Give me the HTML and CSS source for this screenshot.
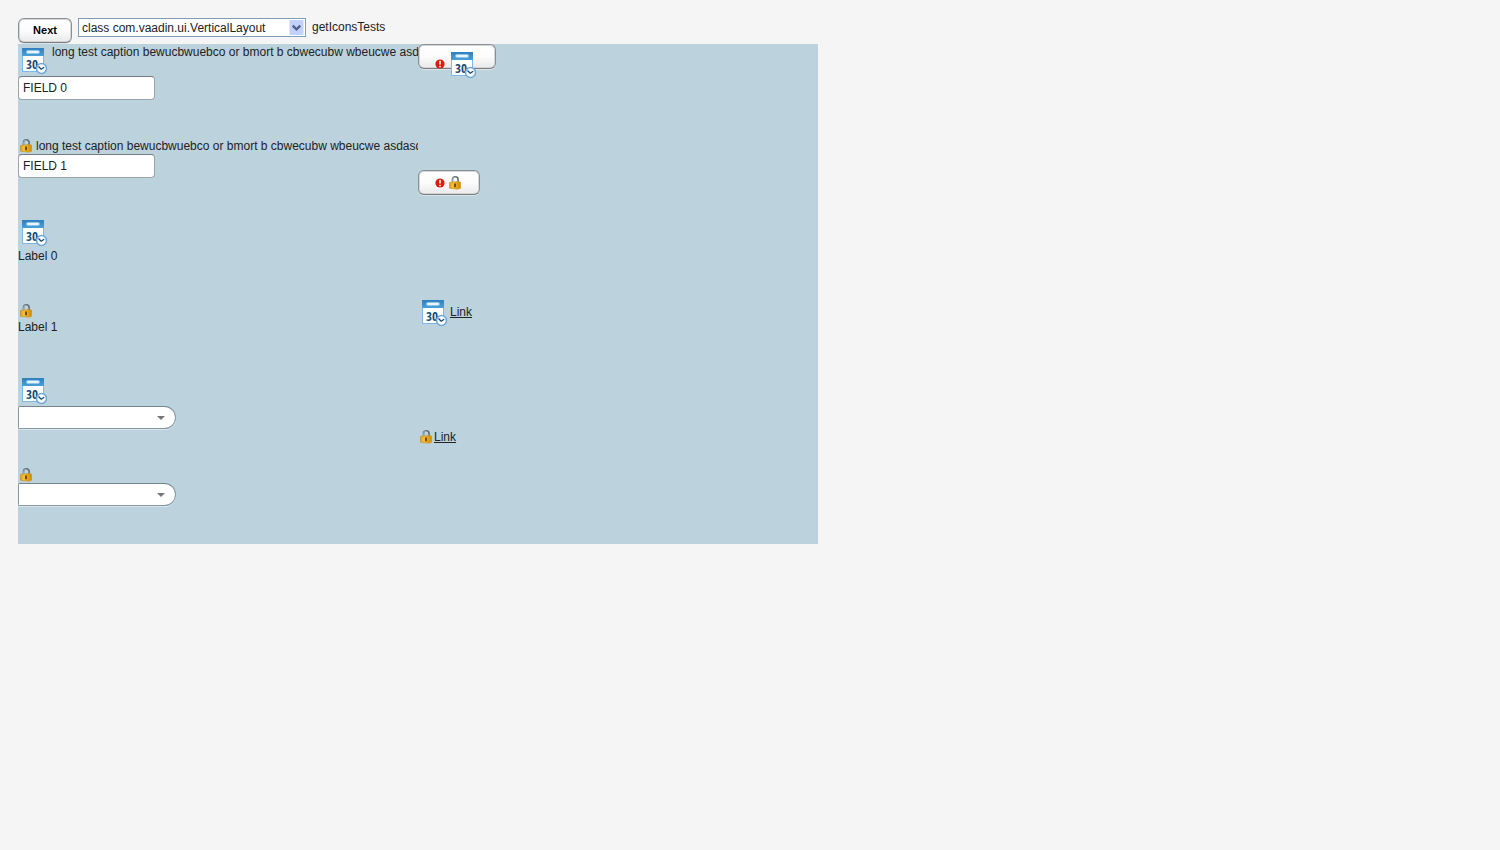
FILE: index.html
```html
<!DOCTYPE html>
<html lang="en">
<head>
<meta charset="utf-8">
<title>Icons Tests</title>
<link rel="stylesheet" href="styles.css">
</head>
<body>
<svg class="defs" aria-hidden="true">
  <defs>
    <linearGradient id="head" x1="0" y1="0" x2="0" y2="1"><stop offset="0" stop-color="#2f7fbd"/><stop offset="1" stop-color="#4ba0d8"/></linearGradient>
    <linearGradient id="gold" x1="0" y1="0" x2="1" y2="0"><stop offset="0" stop-color="#e09a12"/><stop offset=".3" stop-color="#f9c03e"/><stop offset="1" stop-color="#d08a00"/></linearGradient>
  </defs>
  <symbol id="calendar" viewBox="0 0 32 32">
    <rect x="4.500" y="9.500" width="21" height="18" fill="#fff" stroke="#7db9e8"/>
    <path d="M4 4h22v8H4z" fill="url(#head)"/>
    <rect x="8.500" y="6.500" width="13" height="3" rx="1.500" fill="#e8f5fd" stroke="#8bc5ec"/>
    <text x="8" y="25" class="day">30</text>
    <circle cx="23.500" cy="24.500" r="5" fill="#f5fbff" stroke="#6da8d8" stroke-width="1.500"/>
    <path d="M20.500 22.500l2.700 2.700 3-2" fill="none" stroke="#17476f" stroke-width="1.300"/>
  </symbol>
  <symbol id="lock" viewBox="0 0 16 16">
    <path d="M5.500 8V4.500a2.800 2.800 0 0 1 5.600 0V8" fill="none" stroke="#5f6f78" stroke-width="1.600"/>
    <path d="M5.500 7V4.700a2.600 2.600 0 0 1 2.800-2.500" fill="none" stroke="#b4c0c5" stroke-width=".7"/>
    <path d="M2.500 7.500l8-1 3 .5v6.300l-3 .9-8-1z" fill="url(#gold)" stroke="#c98d18" stroke-width=".6"/>
    <path d="M8 8.500v3.700" stroke="#4b3000" stroke-width="1.500"/>
  </symbol>
  <symbol id="error" viewBox="0 0 10 10">
    <circle cx="5" cy="5" r="4.600" fill="#dc1c08"/>
    <path d="M5 1.800v3.700M5 6.700v1.500" stroke="#fff" stroke-width="1.600"/>
  </symbol>
</svg>
<header class="toolbar">
  <button class="btn next" type="button">Next</button>
  <div class="picker">
    <select class="layout-select" aria-label="Layout class"><option>class com.vaadin.ui.VerticalLayout</option></select>
    <svg class="picker-arrow" viewBox="0 0 15 16" aria-hidden="true"><rect width="15" height="16" rx="1" fill="#c1d1fb"/><path d="M3.500 6l4 4 4-4" fill="none" stroke="#4d6185" stroke-width="2.400"/></svg>
  </div>
  <span class="test-name">getIconsTests</span>
</header>
<main class="stage">
  <section class="column fields">
    <div class="item">
      <label class="caption" for="field0"><svg class="icon large"><use href="#calendar"/></svg><span class="caption-text">long test caption bewucbwuebco or bmort b cbwecubw wbeucwe asdasdasd</span></label>
      <input class="text-field" id="field0" type="text" value="FIELD 0">
    </div>
    <div class="item">
      <label class="caption" for="field1"><svg class="icon small"><use href="#lock"/></svg><span class="caption-text">long test caption bewucbwuebco or bmort b cbwecubw wbeucwe asdasdasd</span></label>
      <input class="text-field" id="field1" type="text" value="FIELD 1">
    </div>
    <div class="item">
      <div class="caption"><svg class="icon large"><use href="#calendar"/></svg></div>
      <div class="label">Label 0</div>
    </div>
    <div class="item">
      <div class="caption"><svg class="icon small"><use href="#lock"/></svg></div>
      <div class="label">Label 1</div>
    </div>
    <div class="item">
      <label class="caption" for="combo0"><svg class="icon large"><use href="#calendar"/></svg></label>
      <div class="combo"><select class="combo-select" id="combo0" aria-label="Select 0"><option></option></select><svg class="combo-arrow" viewBox="0 0 8 4" aria-hidden="true"><path d="M0 0h8L4 4z"/></svg></div>
    </div>
    <div class="item">
      <label class="caption" for="combo1"><svg class="icon small"><use href="#lock"/></svg></label>
      <div class="combo"><select class="combo-select" id="combo1" aria-label="Select 1"><option></option></select><svg class="combo-arrow" viewBox="0 0 8 4" aria-hidden="true"><path d="M0 0h8L4 4z"/></svg></div>
    </div>
  </section>
  <section class="column actions">
    <button class="btn icon-btn tall" type="button" aria-label="Calendar"><svg class="error"><use href="#error"/></svg><svg class="icon large"><use href="#calendar"/></svg></button>
    <button class="btn icon-btn" type="button" aria-label="Lock"><svg class="error"><use href="#error"/></svg><svg class="icon small"><use href="#lock"/></svg></button>
    <a class="link" href="#"><svg class="icon large"><use href="#calendar"/></svg><span class="link-text">Link</span></a>
    <a class="link" href="#"><svg class="icon small"><use href="#lock"/></svg><span class="link-text">Link</span></a>
  </section>
</main>
</body>
</html>
```
FILE: styles.css
```css
* { box-sizing: border-box; }
body {
  margin: 0;
  padding: 18px;
  background: #f5f5f5;
  color: #222;
  font: 12px/16px "Liberation Sans", Arial, sans-serif;
}
input, select, button { font: inherit; color: inherit; margin: 0; }
svg { display: block; flex: none; }
.defs { position: absolute; width: 0; height: 0; }

.toolbar { display: flex; align-items: flex-start; gap: 6px; height: 26px; }
.btn {
  display: flex;
  align-items: center;
  justify-content: center;
  height: 25px;
  border: 1px solid #8b9095;
  border-bottom-color: #777c80;
  border-radius: 6px;
  background: linear-gradient(#fff, #fcfcfc 50%, #e9e9e9);
  box-shadow: inset 0 0 0 1px #d4d6d8, 0 1px 0 #dfe5e8;
}
.next { padding: 0 0 2px; width: 54px; font-size: 11px; font-weight: bold; color: #000; }
.picker { position: relative; width: 228px; }
.layout-select {
  appearance: none;
  display: block;
  width: 100%;
  height: 19px;
  padding: 0 18px 0 3px;
  border: 1px solid #7f9db9;
  border-radius: 0;
  background: #fff;
}
.picker-arrow { position: absolute; top: 2px; right: 2px; width: 15px; height: 15px; pointer-events: none; }
.test-name { line-height: 18px; }

.stage { display: flex; width: 100%; max-width: 800px; background: #bcd2dd; }
.column { flex: 1 1 0; min-width: 0; display: flex; flex-direction: column; align-items: flex-start; }
.fields { gap: 38px; padding-bottom: 38px; }
.actions { gap: 101px; }
.item { width: 100%; }
.caption { display: flex; overflow: hidden; gap: 2px; white-space: nowrap; }
.large { width: 32px; height: 32px; }
.small { width: 16px; height: 16px; }
.day { font: bold 13px "Liberation Sans Narrow", "Open Sans Condensed", "Noto Sans", sans-serif; fill: #174a78; }
.text-field {
  display: block;
  width: 137px;
  height: 24px;
  padding: 0 4px;
  border: 1px solid #9aa5ab;
  border-top-color: #747c81;
  border-radius: 4px;
  background: #fff;
}
.label { line-height: 17px; }
.combo { position: relative; width: 158px; }
.combo-select {
  appearance: none;
  display: block;
  width: 100%;
  height: 23px;
  border: 1px solid #859aa6;
  border-top-color: #74848d;
  border-radius: 2px 12px 12px 2px;
  background: #fff;
  box-shadow: 0 1px 0 #d9e6ec;
}
.combo-arrow { position: absolute; right: 11px; top: 10px; width: 8px; height: 4px; fill: #777; pointer-events: none; }

.icon-btn { gap: 2px; padding: 0 16px; }
.tall { align-items: flex-start; padding-top: 3px; }
.tall .error { margin-top: 11px; }
.error { width: 10px; height: 10px; }
.link { display: flex; align-items: center; color: #222; }
```
